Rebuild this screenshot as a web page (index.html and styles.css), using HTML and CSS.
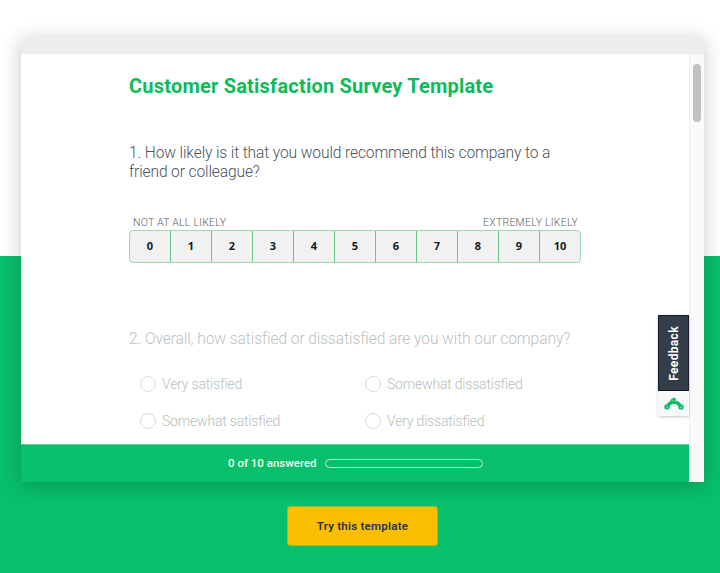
FILE: index.html
```html
<!DOCTYPE html>
<html lang="en">
<head>
<meta charset="utf-8">
<title>Customer Satisfaction Survey Template</title>
<link rel="stylesheet" href="styles.css">
</head>
<body>
<main class="page">
  <section class="window">
    <div class="titlebar"></div>
    <div class="viewport">
      <div class="survey">
        <div class="questions">
          <h1><span>Customer Satisfaction Survey Template</span></h1>
          <p class="question q1">1. How likely is it that you would recommend this company to a<br>friend or colleague?</p>
          <div class="labels"><span>NOT AT ALL LIKELY</span><span>EXTREMELY LIKELY</span></div>
          <div class="scale"><b>0</b><b>1</b><b>2</b><b>3</b><b>4</b><b>5</b><b>6</b><b>7</b><b>8</b><b>9</b><b>10</b></div>
          <p class="question q2">2. Overall, how satisfied or dissatisfied are you with our company?</p>
          <div class="options">
            <label><i></i><span>Very satisfied</span></label>
            <label><i></i><span>Somewhat dissatisfied</span></label>
            <label><i></i><span>Somewhat satisfied</span></label>
            <label><i></i><span>Very dissatisfied</span></label>
          </div>
        </div>
        <footer class="progress"><span>0 of 10 answered</span><div class="track"></div></footer>
        <aside class="feedback">
          <div class="tab"><span>Feedback</span></div>
          <div class="brand">
            <svg width="20" height="14" viewBox="0 0 20 14" fill="none" stroke="#08bf6b">
              <path d="M4 9.4C4.6 6.4 6.8 5.2 10 5.2s5.4 1.2 6 4.2" stroke-width="3.4"/>
              <path d="M7 4.6C7.3 2.6 8.8 1.5 11.2 1.3M9.5 4C9.8 2.9 10.6 2.4 12 2.3" stroke-width="1.6"/>
              <circle cx="3" cy="9.9" r="1.7" stroke-width="2"/>
              <circle cx="17" cy="9.9" r="1.7" stroke-width="2"/>
            </svg>
          </div>
        </aside>
      </div>
      <div class="scrollbar"><div class="thumb"></div></div>
    </div>
  </section>
  <button class="cta"><span>Try this template</span></button>
</main>
</body>
</html>
```
FILE: styles.css
```css
* { box-sizing: border-box; }
body { margin: 0; font-family: Roboto, sans-serif; }
.page {
  height: 573px;
  padding-top: 37px;
  display: flex;
  flex-direction: column;
  align-items: center;
  background: linear-gradient(#fff 256px, #08bf6b 256px);
  overflow: hidden;
}
.window {
  width: 683px;
  height: 445px;
  margin-left: 5px;
  border-radius: 4px 4px 0 0;
  box-shadow: 0 3px 20px rgba(0, 0, 0, .22);
}
.titlebar { height: 17px; background: #ebeeed; border-radius: 4px 4px 0 0; }
.viewport { height: 428px; display: flex; background: #fff; }
.survey { position: relative; width: 668px; display: flex; flex-direction: column; }
.questions { height: 390px; padding: 19px 0 0 108px; overflow: hidden; }
span { white-space: nowrap; }
h1 { margin: 0; font-size: 20px; line-height: 27px; font-weight: 700; letter-spacing: .21px; color: #0abb5c; }
.question { margin: 0; font-size: 15.6px; line-height: 19px; font-weight: 300; letter-spacing: -.13px; color: #4c535d; white-space: nowrap; }
.q1 { margin-top: 44px; }
.labels { display: flex; justify-content: space-between; width: 452px; margin-top: 34px; padding: 0 3px 0 4px; font-size: 10.5px; line-height: 14px; font-weight: 300; letter-spacing: .24px; color: #5a6066; }
.scale { display: flex; width: 452px; height: 33px; border: 1px solid #9bd9b3; border-radius: 4px; background: #f1f1f1; overflow: hidden; }
.scale b { flex: 1; border-left: 1px solid #65c78b; font: 700 11px/30px "Open Sans", sans-serif; text-align: center; color: #111923; }
.scale b:first-child { border-left: 0; }
.q2 { margin-top: 67px; color: #bcc2bf; letter-spacing: -.09px; }
.options { display: grid; grid-template-columns: 225px 225px; grid-template-rows: 37px 37px; margin: 16px 0 0 11px; }
.options label { display: flex; align-items: center; font-size: 14px; font-weight: 300; letter-spacing: -.19px; color: #b8bebb; }
.options i { width: 16px; height: 16px; margin-right: 6px; border: 1px solid #d7dbd9; border-radius: 50%; }
.progress { height: 38px; display: flex; align-items: center; padding: 0 0 1px 207px; background: #08bf6b; border-top: 1px solid #65cf93; color: #effff5; font-size: 11.5px; font-weight: 500; line-height: 14px; }
.progress span { width: 87px; }
.track { width: 158px; height: 9px; margin: 1px 0 0 10px; border: 1px solid #b5edcc; border-radius: 5px; }
.feedback { position: absolute; top: 261px; right: 0; width: 31px; height: 101px; box-shadow: 0 1px 3px rgba(0, 0, 0, .22); border-radius: 2px 0 0 3px; }
.tab { height: 76px; display: flex; justify-content: center; align-items: center; background: #333e48; border: 1px solid #111d2e; }
.tab span { writing-mode: vertical-rl; transform: rotate(180deg); font-size: 12px; line-height: 14px; font-weight: 700; letter-spacing: .35px; color: #fff; }
.brand { height: 25px; display: flex; align-items: center; justify-content: center; background: #f7f9f8; border-radius: 0 0 0 3px; }
.scrollbar { width: 15px; padding: 10px 0 0 3px; background: #fafafa; border-left: 1px solid #ededed; }
.thumb { width: 8px; height: 58px; background: #c1c1c1; border-radius: 4px; }
.cta { width: 151px; height: 40px; margin: 24px 0 0 5px; padding: 0; background: #fcbe00; border: 1px solid #91be35; border-radius: 3px; font: 600 11.5px Roboto, sans-serif; letter-spacing: .25px; color: #293449; }
```
